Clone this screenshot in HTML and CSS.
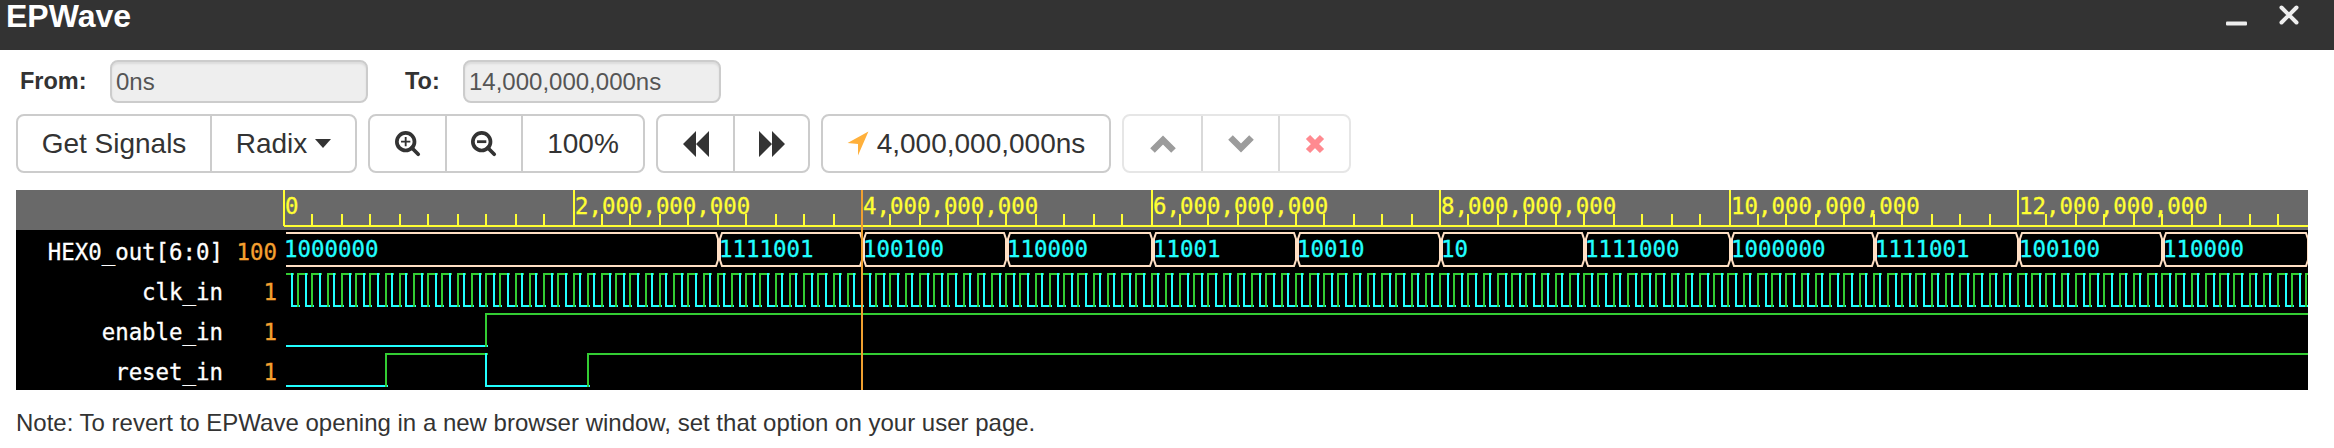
FILE: index.html
```html
<!DOCTYPE html>
<html lang="en">
<head>
    <meta charset="UTF-8">
    <title>EPWave</title>
    <link rel="stylesheet" href="styles.css">
</head>
<body>

    <header class="titlebar">
        <span class="title">EPWave</span>
        <svg class="win-icon min-icon" viewBox="0 0 21 5"><rect x="0" y="0.5" width="21" height="4" rx="1"/></svg>
        <svg class="win-icon close-icon" viewBox="0 0 20 20"><path d="M2.5 2.5L17.5 17.5M17.5 2.5L2.5 17.5"/></svg>
    </header>

    <main>
        <div class="range-row">
            <label class="from-label">From:</label>
            <input class="range-input" type="text" value="0ns" disabled>
            <label class="to-label">To:</label>
            <input class="range-input" type="text" value="14,000,000,000ns" disabled>
        </div>

        <div class="toolbar">
            <div class="btn-group">
                <button class="btn signals-btn">Get Signals</button>
                <button class="btn radix-btn">Radix <span class="caret"></span></button>
            </div>
            <div class="btn-group">
                <button class="btn icon-btn">
                    <svg class="glyph" viewBox="0 0 28 28">
                        <circle cx="11.5" cy="11.5" r="9.5" class="lens"/>
                        <path d="M18 18L25 25" class="handle"/>
                        <path d="M11.5 6.5V16.5M6.5 11.5H16.5" class="mark"/>
                    </svg>
                </button>
                <button class="btn icon-btn">
                    <svg class="glyph" viewBox="0 0 28 28">
                        <circle cx="11.5" cy="11.5" r="9.5" class="lens"/>
                        <path d="M18 18L25 25" class="handle"/>
                        <path d="M6.5 11.5H16.5" class="mark thick"/>
                    </svg>
                </button>
                <button class="btn zoom-btn">100%</button>
            </div>
            <div class="btn-group">
                <button class="btn skip-btn">
                    <svg class="glyph" viewBox="0 0 24 24"><path d="M12 0V24L0 12ZM24 0V24L12 12Z" class="solid"/></svg>
                </button>
                <button class="btn skip-btn">
                    <svg class="glyph" viewBox="0 0 24 24"><path d="M0 0V24L12 12ZM12 0V24L24 12Z" class="solid"/></svg>
                </button>
            </div>
            <div class="btn-group">
                <button class="btn cursor-btn">
                    <svg class="arrow-icon" viewBox="0 0 21 24"><path d="M20.5 0.5L0.5 11.5L10.5 12.5L10.5 23.5Z"/></svg>
                    4,000,000,000ns
                </button>
            </div>
            <div class="btn-group disabled">
                <button class="btn nav-btn">
                    <svg class="chevron" viewBox="0 0 26 18"><path d="M2.5 15.5L13 5L23.5 15.5"/></svg>
                </button>
                <button class="btn nav-btn">
                    <svg class="chevron" viewBox="0 0 26 18"><path d="M2.5 2.5L13 13L23.5 2.5"/></svg>
                </button>
                <button class="btn nav-btn remove-btn">
                    <svg class="cross" viewBox="0 0 20 20"><path d="M3 3L17 17M17 3L3 17"/></svg>
                </button>
            </div>
        </div>

        <svg id="wave" class="wave" viewBox="16 190 2292 200"></svg>

        <p class="note">Note: To revert to EPWave opening in a new browser window, set that option on your user page.</p>
    </main>

    <script src="wave.js"></script>

</body>
</html>
```

FILE: styles.css
```css
body {
    margin: 0;
    font-family: "Liberation Sans", Arial, sans-serif;
    color: #333;
    background: #fff;
    overflow: hidden;
}

.titlebar {
    height: 50px;
    background: #333;
    color: #fff;
    display: flex;
    align-items: flex-start;
    padding: 0 35px 0 6px;
}

.title {
    font-size: 32px;
    font-weight: bold;
    line-height: 32px;
    flex: 1;
}

.win-icon {
    display: block;
    fill: #eee;
}

.min-icon {
    width: 21px;
    height: 5px;
    margin-top: 21px;
    margin-right: 32px;
}

.close-icon {
    width: 20px;
    height: 20px;
    margin-top: 5px;
    fill: none;
    stroke: #eee;
    stroke-width: 4;
    stroke-linecap: round;
}

main {
    padding: 10px 0 0 16px;
}

.range-row {
    display: flex;
    align-items: center;
    height: 43px;
    font-size: 24px;
}

.range-row label {
    font-weight: bold;
    font-size: 23.5px;
}

.from-label {
    margin-left: 4px;
    width: 90px;
}

.to-label {
    margin-left: 37px;
    width: 58px;
}

.range-input {
    box-sizing: border-box;
    width: 258px;
    height: 43px;
    padding: 0 3px 0 4px;
    border: 2px solid #ccc;
    border-radius: 8px;
    background: #eee;
    box-shadow: inset 0 2px 2px rgba(0, 0, 0, 0.08);
    font: 24px "Liberation Sans", Arial, sans-serif;
    color: #555;
    opacity: 1;
    -webkit-text-fill-color: #555;
}

.toolbar {
    display: flex;
    margin-top: 11px;
    gap: 11px;
}

.btn-group {
    display: flex;
    height: 59px;
    box-sizing: border-box;
    border: 2px solid #ccc;
    border-radius: 8px;
}

.btn {
    border: none;
    border-left: 2px solid #ccc;
    background: none;
    padding: 0;
    margin: 0;
    font: 28px "Liberation Sans", Arial, sans-serif;
    color: #333;
    display: flex;
    align-items: center;
    justify-content: center;
}

.btn:first-child {
    border-left: none;
}

.signals-btn { width: 192px; }
.radix-btn { width: 145px; gap: 8px; }
.icon-btn { width: 76px; }
.icon-btn:first-child { width: 75px; }
.zoom-btn { width: 122px; }
.skip-btn { width: 75px; }
.cursor-btn { width: 286px; gap: 8px; }
.nav-btn { width: 77px; }
.remove-btn { width: 71px; }

.caret {
    width: 0;
    height: 0;
    border-top: 9px solid #333;
    border-left: 8px solid transparent;
    border-right: 8px solid transparent;
}

.glyph {
    width: 26px;
    height: 26px;
    fill: none;
    stroke: #333;
}

.lens { stroke-width: 4; }
.handle { stroke-width: 4; stroke-linecap: round; }
.mark { stroke-width: 2; }
.mark.thick { stroke-width: 3; }
.glyph .solid { fill: #333; stroke: none; }

.arrow-icon {
    width: 22px;
    height: 25px;
    fill: #ffb03b;
}

.disabled {
    border-color: #e6e6e6;
}

.disabled .btn {
    border-left-color: #d9d9d9;
}

.chevron {
    width: 26px;
    height: 18px;
    fill: none;
    stroke: #9c9c9c;
    stroke-width: 6.5;
}

.cross {
    width: 20px;
    height: 20px;
    fill: none;
    stroke: #ff8a90;
    stroke-width: 6;
}

.wave {
    display: block;
    width: 2292px;
    height: 200px;
    margin-top: 17px;
    background: #000;
    shape-rendering: crispEdges;
    font-family: "DejaVu Sans Mono", monospace;
    font-size: 22.4px;
}

.wave text {
    shape-rendering: auto;
    stroke-width: 0.3px;
}

.ruler-bg { fill: #696969; }
.ruler-line { fill: #ffff33; }
.ruler-text { fill: #ffff33; stroke: #ffff33; }
.signal-name { fill: #fff; stroke: #fff; text-anchor: end; }
.signal-value { fill: #f5a030; stroke: #f5a030; text-anchor: end; }
.bus-line { fill: none; stroke: #ffdfc4; stroke-width: 2; shape-rendering: auto; }
.bus-text { fill: #22ffff; stroke: #22ffff; }
.bit-high { fill: #33cc33; }
.bit-low { fill: #22ffff; }
.cursor-line { fill: #f0a030; }

.note {
    margin: 19px 0 0 0;
    font-size: 24px;
    line-height: 28px;
}
```

FILE: wave.js
```js
const NS = "http://www.w3.org/2000/svg";
const svg = document.getElementById("wave");

const X0 = 284;
const X_END = 2308;
const PX_PER_NS = 144.5 / 1e9;

function tx(ns) {
    return X0 + ns * PX_PER_NS;
}

function snap(x) {
    return Math.round(x / 2) * 2;
}

function add(tag, attrs, text) {
    let el = document.createElementNS(NS, tag);
    for (let key in attrs) {
        el.setAttribute(key, attrs[key]);
    }
    if (text !== undefined) el.textContent = text;
    svg.appendChild(el);
    return el;
}

function rect(x, y, w, h, cls) {
    add("rect", { x: x, y: y, width: w, height: h, class: cls });
}

function drawRuler() {
    rect(16, 190, 2292, 40, "ruler-bg");
    rect(X0, 225, X_END - X0, 2, "ruler-line");
    for (let i = 0; i < 70; i++) {
        let x = snap(tx(i * 2e8));
        if (i % 10 === 0) {
            rect(x - 1, 190, 2, 36, "ruler-line");
            let label = (i * 2e8).toLocaleString("en-US");
            add("text", { x: x + 1, y: 214, class: "ruler-text" }, label);
        } else {
            rect(x - 1, 214, 2, 11, "ruler-line");
        }
    }
}

function drawLabels() {
    let rows = [
        ["HEX0_out[6:0]", "100", 260],
        ["clk_in", "1", 300],
        ["enable_in", "1", 340],
        ["reset_in", "1", 380]
    ];
    rows.forEach(row => {
        add("text", { x: 223, y: row[2], class: "signal-name" }, row[0]);
        add("text", { x: 277, y: row[2], class: "signal-value" }, row[1]);
    });
}

function drawBus() {
    let values = ["1000000", "1111001", "100100", "110000", "11001", "10010", "10",
                  "1111000", "1000000", "1111001", "100100", "110000"];
    let top = 233;
    let bottom = 266;
    values.forEach((value, i) => {
        let start = i === 0 ? X0 : snap(tx((i + 2) * 1e9));
        let end = snap(tx((i + 3) * 1e9));
        let d;
        if (i === 0) {
            d = `M286 ${top}H${end - 2}L${end} ${top + 6}V${bottom - 6}L${end - 2} ${bottom}H286`;
        } else {
            d = `M${start + 4} ${top}L${start + 2} ${top + 6}V${bottom - 6}L${start + 4} ${bottom}` +
                `H${end - 2}L${end} ${bottom - 6}V${top + 6}L${end - 2} ${top}Z`;
        }
        add("path", { d: d, class: "bus-line" });
        add("text", { x: i === 0 ? start : start + 1, y: 257, class: "bus-text" }, value);
    });
}

// edges are x positions, the level flips at every edge
function drawBit(top, bottom, edges, high) {
    let from = 286;
    edges.concat([X_END]).forEach((x, i) => {
        let last = i === edges.length;
        let to = last ? X_END : x + 2;
        rect(from, high ? top - 1 : bottom - 1, to - from, 2, high ? "bit-high" : "bit-low");
        high = !high;
        if (!last) {
            rect(x - 1, top - 1, 2, bottom - top + 2, high ? "bit-high" : "bit-low");
        }
        from = x + 1;
    });
}

function clockEdges() {
    let edges = [];
    let half = 289 / 40;
    for (let x = X0 + half; x < X_END; x += half) {
        edges.push(snap(x));
    }
    return edges;
}

drawRuler();
drawLabels();
drawBus();
drawBit(274, 306, clockEdges(), true);
drawBit(314, 346, [486], false);
drawBit(354, 386, [386, 486, 588], false);
rect(861, 190, 2, 200, "cursor-line");
```
